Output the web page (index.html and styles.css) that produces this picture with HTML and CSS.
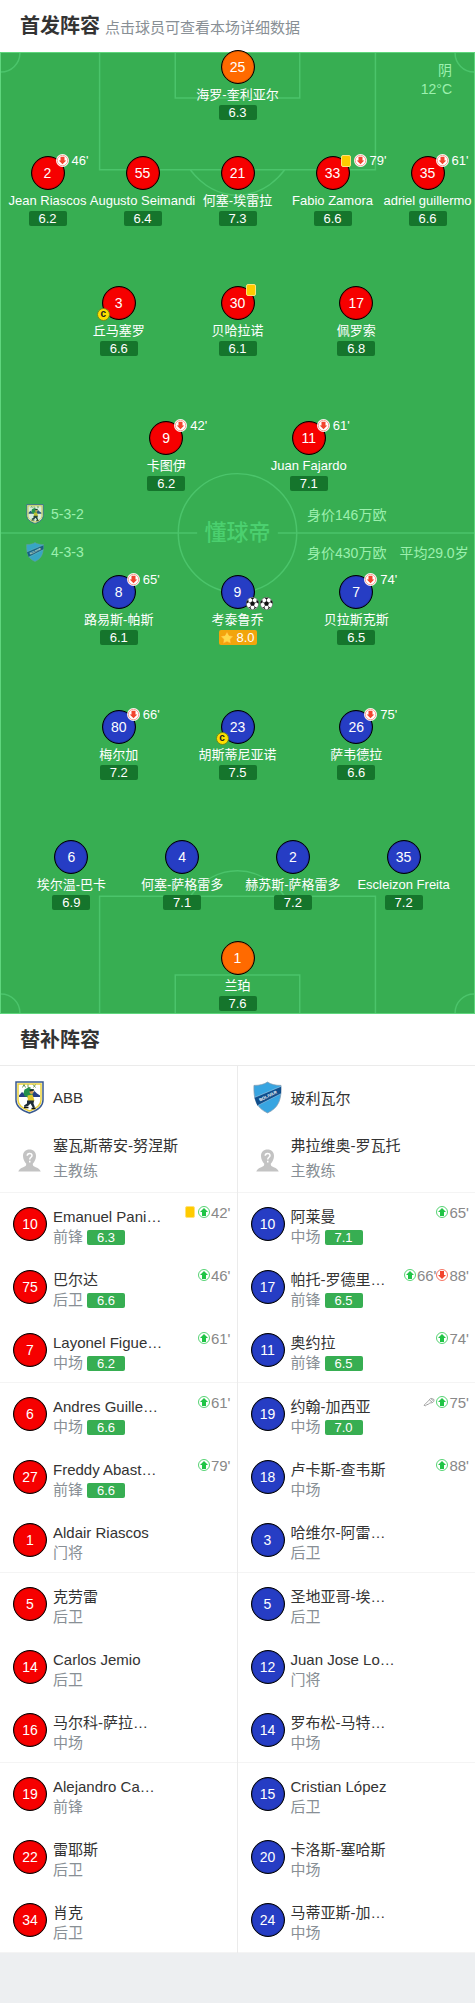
FILE: index.html
```html
<!DOCTYPE html>
<html lang="zh-CN">

<head>
    <meta charset="UTF-8">
    <meta name="viewport" content="width=device-width, initial-scale=1.0">
    <title>首发阵容</title>
    <link rel="stylesheet" href="styles.css">
</head>

<body>
    <!-- 图标 -->
    <svg class="sprite" aria-hidden="true">
        <symbol id="down" viewBox="0 0 26 26">
            <circle cx="13" cy="13" r="13" fill="#fff"/>
            <circle cx="13" cy="13" r="10.5" fill="none" stroke="#f2442e" stroke-width="1"/>
            <path d="M9 5.5h8V13h3.5L13 20.500 5.500 13H9z" fill="#f2442e"/>
        </symbol>
        <symbol id="out" viewBox="0 0 24 24">
            <circle cx="12" cy="12" r="11" fill="#fff" stroke="#f2442e" stroke-width="1.5"/>
            <path d="M8 4h8v8h4l-8 8-8-8h4z" fill="#f2442e"/>
        </symbol>
        <symbol id="up" viewBox="0 0 24 24">
            <circle cx="12" cy="12" r="11" fill="#fff" stroke="#1fc445" stroke-width="1.5"/>
            <path d="M8 20h8v-8h4l-8-8-8 8h4z" fill="#1fc445"/>
        </symbol>
        <symbol id="ball" viewBox="0 0 26 26">
            <circle cx="13" cy="13" r="12.4" fill="#fff" stroke="#444" stroke-width="1"/>
            <path d="M13 8l5 3.7-1.9 5.8H9.9L8 11.7zM8.5 1.5h9L13 4.8zM1 9.5L4.5 5l.8 5.2L1 14zM25 9.5L21.5 5l-.8 5.2L25 14zM4 20l5.2.4L11 25.2zM22 20l-5.2.4L15 25.2z" fill="#111"/>
            <path d="M13 8V4M18 11.7l3.5-1.5M16.1 17.5l2 3M9.900 17.5l-2 3M8 11.7l-3.5-1.5" stroke="#111" stroke-width="1.2"/>
        </symbol>
        <symbol id="star" viewBox="0 0 26 24">
            <path d="M13 1l3.800 7.200 8 1.300-5.600 5.700 1.100 7.900-7.300-3.400-7.300 3.400 1.100-7.900L1.200 9.500l8-1.300z" fill="#ffd84a" stroke="#ff9418" stroke-width="1" stroke-linejoin="round"/>
        </symbol>
        <symbol id="assist" viewBox="0 0 24 18">
            <path d="M2 15.5L12.5 5c1-2.5 2.5-3.5 5-3l4.5 2c.5 3-1 5.5-4 6.5l-5 .5-3 3.5-2-1-3 3.500zM13 5l5 4M16 2.5L21 7" fill="#fff" stroke="#888" stroke-width="1.5" stroke-linejoin="round"/>
        </symbol>
        <symbol id="head" viewBox="0 0 46 46">
            <path d="M23 1c8 0 13 5 13 13 0 6-3 12-6.5 15.5 0 4 1.5 5 6 7C41 38.5 44 41 45.5 45H.5C2 41 5 38.5 10.5 36.5c4.500-2 6-3 6-7C13 26 10 20 10 14 10 6 15 1 23 1z" fill="#c3c3c3"/>
            <path d="M18.5 13.5c0-6 9.500-6 9.500-.5 0 3.500-4.500 3.500-4.500 8M23.500 23.500v3.500" fill="none" stroke="#fff" stroke-width="3"/>
        </symbol>
        <symbol id="abb" viewBox="0 0 58 66">
            <path d="M2 2h54v36c0 12-11 21-27 26C13 59 2 50 2 38z" fill="#fff" stroke="#39598f" stroke-width="3"/>
            <path d="M6 6h46v32c0 10-9 17-23 22C15 55 6 48 6 38z" fill="none" stroke="#ecd23c" stroke-width="3"/>
            <path d="M8 29l6-7 5 4 5-6 8 6 7-6 5 5 6 4v3H8z" fill="#253f86"/>
            <path d="M15 13l3-6 3 6M26 7v6h5M36 7l5 6M37 13l4-6" fill="none" stroke="#6c9a58" stroke-width="2"/>
            <path d="M19 17l8-4 8 4 2 7-9 10-9-4-2-6z" fill="#23904c"/>
            <circle cx="33" cy="22" r="4" fill="#d79b55"/>
            <path d="M29 17l8-1 2 3-9 2z" fill="#152c24"/>
            <path d="M25 29l10-2 4 12-3 4H26z" fill="#dfc62c"/>
            <path d="M24 39h14l-1 6 3 8-4 1-5-9-5 5-7 2-1-3 6-4z" fill="#1d2b36"/>
            <path d="M18 53h9M33 55h8" stroke="#111" stroke-width="3"/>
        </symbol>
        <symbol id="bolivar" viewBox="0 0 60 66">
            <path d="M30 1c7 5 16 7 28 7 1 28-4 46-28 57C6 54 1 36 2 8c12 0 21-2 28-7z" fill="#38a5e1" stroke="#8298ad" stroke-width="1.5"/>
            <path d="M3 33L58 10v15L9 50z" fill="#104e8b"/>
            <path d="M3 33L58 10M9 50l49-25" stroke="#bfe0f5" stroke-width="1"/>
            <text class="crest-text" x="31" y="33" transform="rotate(-26 31 30)">BOLIVAR</text>
        </symbol>
    </svg>

    <header class="title">
        <h2>首发阵容</h2>
        <span>点击球员可查看本场详细数据</span>
    </header>

    <main class="pitch">
        <!-- 球场线 -->
        <svg class="lines" viewBox="0 0 475 962" preserveAspectRatio="none" aria-hidden="true">
            <g fill="none" stroke="#4bc46b" stroke-width="1.5">
                <path d="M99 0v117h277V0M175 0v45h125V0M190 117c26 34 69 34 95 0"/>
                <path d="M99 962V845h277v117M175 962v-38h125v38M190 845c26-34 69-34 95 0"/>
                <path d="M0 481h197M278 481h197"/>
                <circle cx="237.5" cy="481" r="59.5"/>
                <path d="M0 19A19 19 0 0 0 19 0M475 19A19 19 0 0 1 456 0M0 943a19 19 0 0 1 19 19M475 943a19 19 0 0 0-19 19"/>
            </g>
        </svg>
        <div class="weather">阴<br>12°C</div>

        <div class="row first">
            <a class="player" href="#"><b class="num gk">25</b><span class="name">海罗-奎利亚尔</span><i class="rate">6.3</i></a>
        </div>
        <div class="row row5">
            <a class="player" href="#"><b class="num red">2<span class="ev"><svg><use href="#down"/></svg>46'</span></b><span class="name">Jean Riascos</span><i class="rate">6.2</i></a>
            <a class="player" href="#"><b class="num red">55</b><span class="name">Augusto Seimandi</span><i class="rate">6.4</i></a>
            <a class="player" href="#"><b class="num red">21</b><span class="name">何塞-埃雷拉</span><i class="rate">7.3</i></a>
            <a class="player" href="#"><b class="num red">33<span class="ev"><em class="card"></em><svg><use href="#down"/></svg>79'</span></b><span class="name">Fabio Zamora</span><i class="rate">6.6</i></a>
            <a class="player" href="#"><b class="num red">35<span class="ev"><svg><use href="#down"/></svg>61'</span></b><span class="name">adriel guillermo</span><i class="rate">6.6</i></a>
        </div>
        <div class="row row3 mid">
            <a class="player" href="#"><b class="num red">3<span class="cap">c</span></b><span class="name">丘马塞罗</span><i class="rate">6.6</i></a>
            <a class="player" href="#"><b class="num red">30<span class="ev"><em class="card"></em></span></b><span class="name">贝哈拉诺</span><i class="rate">6.1</i></a>
            <a class="player" href="#"><b class="num red">17</b><span class="name">佩罗索</span><i class="rate">6.8</i></a>
        </div>
        <div class="row row2 far">
            <a class="player" href="#"><b class="num red">9<span class="ev"><svg><use href="#down"/></svg>42'</span></b><span class="name">卡图伊</span><i class="rate">6.2</i></a>
            <a class="player" href="#"><b class="num red">11<span class="ev"><svg><use href="#down"/></svg>61'</span></b><span class="name">Juan Fajardo</span><i class="rate">7.1</i></a>
        </div>

        <div class="info">
            <div class="info-line">
                <div class="form"><svg><use href="#abb"/></svg>5-3-2</div>
                <div class="worth"><span>身价146万欧</span></div>
            </div>
            <div class="info-line">
                <div class="form"><svg><use href="#bolivar"/></svg>4-3-3</div>
                <div class="worth"><span>身价430万欧</span><span>平均29.0岁</span></div>
            </div>
            <div class="brand">懂球帝</div>
        </div>

        <div class="row row3">
            <a class="player" href="#"><b class="num blue">8<span class="ev"><svg><use href="#down"/></svg>65'</span></b><span class="name">路易斯-帕斯</span><i class="rate">6.1</i></a>
            <a class="player" href="#"><b class="num blue">9<span class="goal"><svg><use href="#ball"/></svg><svg><use href="#ball"/></svg></span></b><span class="name">考泰鲁乔</span><i class="rate best"><svg><use href="#star"/></svg>8.0</i></a>
            <a class="player" href="#"><b class="num blue">7<span class="ev"><svg><use href="#down"/></svg>74'</span></b><span class="name">贝拉斯克斯</span><i class="rate">6.5</i></a>
        </div>
        <div class="row row3 far">
            <a class="player" href="#"><b class="num blue">80<span class="ev"><svg><use href="#down"/></svg>66'</span></b><span class="name">梅尔加</span><i class="rate">7.2</i></a>
            <a class="player" href="#"><b class="num blue">23<span class="cap">c</span></b><span class="name">胡斯蒂尼亚诺</span><i class="rate">7.5</i></a>
            <a class="player" href="#"><b class="num blue">26<span class="ev"><svg><use href="#down"/></svg>75'</span></b><span class="name">萨韦德拉</span><i class="rate">6.6</i></a>
        </div>
        <div class="row row4 mid">
            <a class="player" href="#"><b class="num blue">6</b><span class="name">埃尔温-巴卡</span><i class="rate">6.9</i></a>
            <a class="player" href="#"><b class="num blue">4</b><span class="name">何塞-萨格雷多</span><i class="rate">7.1</i></a>
            <a class="player" href="#"><b class="num blue">2</b><span class="name">赫苏斯-萨格雷多</span><i class="rate">7.2</i></a>
            <a class="player" href="#"><b class="num blue">35</b><span class="name">Escleizon Freita</span><i class="rate">7.2</i></a>
        </div>
        <div class="row near">
            <a class="player" href="#"><b class="num gk">1</b><span class="name">兰珀</span><i class="rate">7.6</i></a>
        </div>
    </main>

    <header class="title bench-title">
        <h2>替补阵容</h2>
    </header>

    <section class="bench">
        <div class="col">
            <div class="team"><svg><use href="#abb"/></svg>ABB</div>
            <div class="coach">
                <svg><use href="#head"/></svg>
                <p>塞瓦斯蒂安-努涅斯<small>主教练</small></p>
            </div>
            <ul class="subs">
                <li><b class="num red">10</b><p>Emanuel Pani…<small>前锋<i class="rate">6.3</i></small></p><span class="time"><em class="card"></em><svg><use href="#up"/></svg>42'</span></li>
                <li><b class="num red">75</b><p>巴尔达<small>后卫<i class="rate">6.6</i></small></p><span class="time"><svg><use href="#up"/></svg>46'</span></li>
                <li><b class="num red">7</b><p>Layonel Figue…<small>中场<i class="rate">6.2</i></small></p><span class="time"><svg><use href="#up"/></svg>61'</span></li>
                <li><b class="num red">6</b><p>Andres Guille…<small>中场<i class="rate">6.6</i></small></p><span class="time"><svg><use href="#up"/></svg>61'</span></li>
                <li><b class="num red">27</b><p>Freddy Abast…<small>前锋<i class="rate">6.6</i></small></p><span class="time"><svg><use href="#up"/></svg>79'</span></li>
                <li><b class="num red">1</b><p>Aldair Riascos<small>门将</small></p></li>
                <li><b class="num red">5</b><p>克劳雷<small>后卫</small></p></li>
                <li><b class="num red">14</b><p>Carlos Jemio<small>后卫</small></p></li>
                <li><b class="num red">16</b><p>马尔科-萨拉…<small>中场</small></p></li>
                <li><b class="num red">19</b><p>Alejandro Ca…<small>前锋</small></p></li>
                <li><b class="num red">22</b><p>雷耶斯<small>后卫</small></p></li>
                <li><b class="num red">34</b><p>肖克<small>后卫</small></p></li>
            </ul>
        </div>
        <div class="col">
            <div class="team"><svg><use href="#bolivar"/></svg>玻利瓦尔</div>
            <div class="coach">
                <svg><use href="#head"/></svg>
                <p>弗拉维奥-罗瓦托<small>主教练</small></p>
            </div>
            <ul class="subs">
                <li><b class="num blue">10</b><p>阿莱曼<small>中场<i class="rate">7.1</i></small></p><span class="time"><svg><use href="#up"/></svg>65'</span></li>
                <li><b class="num blue">17</b><p>帕托-罗德里…<small>前锋<i class="rate">6.5</i></small></p><span class="time"><svg><use href="#up"/></svg>66'<svg><use href="#out"/></svg>88'</span></li>
                <li><b class="num blue">11</b><p>奥约拉<small>前锋<i class="rate">6.5</i></small></p><span class="time"><svg><use href="#up"/></svg>74'</span></li>
                <li><b class="num blue">19</b><p>约翰-加西亚<small>中场<i class="rate">7.0</i></small></p><span class="time"><svg><use href="#assist"/></svg><svg><use href="#up"/></svg>75'</span></li>
                <li><b class="num blue">18</b><p>卢卡斯-查韦斯<small>中场</small></p><span class="time"><svg><use href="#up"/></svg>88'</span></li>
                <li><b class="num blue">3</b><p>哈维尔-阿雷…<small>后卫</small></p></li>
                <li><b class="num blue">5</b><p>圣地亚哥-埃…<small>后卫</small></p></li>
                <li><b class="num blue">12</b><p>Juan Jose Lo…<small>门将</small></p></li>
                <li><b class="num blue">14</b><p>罗布松-马特…<small>中场</small></p></li>
                <li><b class="num blue">15</b><p>Cristian López<small>后卫</small></p></li>
                <li><b class="num blue">20</b><p>卡洛斯-塞哈斯<small>中场</small></p></li>
                <li><b class="num blue">24</b><p>马蒂亚斯-加…<small>中场</small></p></li>
            </ul>
        </div>
    </section>
</body>

</html>
```
FILE: styles.css
```css
* {
    box-sizing: border-box;
}

body {
    margin: 0;
    background: #edeff1;
    color: #333;
    font-family: "Liberation Sans", Arial, "Noto Sans CJK SC", sans-serif;
    font-size: 15px;
}

h2,
p,
ul {
    margin: 0;
    padding: 0;
}

b,
i {
    font-style: normal;
    font-weight: normal;
}

svg {
    display: block;
    flex: none;
}

.sprite {
    display: none;
}

.crest-text {
    font-size: 9px;
    font-weight: bold;
    fill: #fff;
    text-anchor: middle;
}

/* 标题 */
.title {
    display: flex;
    align-items: center;
    gap: 5px;
    height: 52px;
    padding: 0 20px;
    background: #fff;
}

.bench-title {
    height: 51px;
}

.title h2 {
    font-size: 20px;
    line-height: 30px;
}

.title span {
    color: #888f95;
}

/* 球场 */
.pitch {
    position: relative;
    padding-bottom: 2px;
    background: #37ae52;
    border: 1px solid #5fd67d;
    color: #fff;
}

.lines {
    position: absolute;
    top: 0;
    left: 0;
    width: 100%;
    height: 100%;
}

.weather {
    position: absolute;
    top: 8px;
    right: 22px;
    color: #9cf0ae;
    font-size: 14px;
    line-height: 19px;
    text-align: right;
}

.row {
    display: flex;
    justify-content: center;
    margin: 0 -1px;
}

.first {
    margin-top: -3px;
}

.near {
    margin-top: 31px;
}

.row5 {
    margin-top: 36px;
}

.mid {
    margin-top: 60px;
}

.far {
    margin-top: 65px;
}

.player {
    position: relative;
    display: flex;
    flex-direction: column;
    align-items: center;
    color: #fff;
    font-size: 13px;
    text-decoration: none;
}

.row5 .player {
    width: 20%;
}

.row4 {
    padding: 0 16px;
}

.row4 .player {
    width: 25%;
}

.row3 .player {
    width: 25%;
}

.row2 .player {
    width: 30%;
}

.num {
    position: relative;
    display: flex;
    flex: none;
    align-items: center;
    justify-content: center;
    width: 34px;
    height: 34px;
    border: 1px solid #000;
    border-radius: 50%;
    box-shadow: inset 0 0 1px #000;
    color: #fff;
    font-size: 14px;
}

.red {
    background: #f60000;
}

.blue {
    background: #263dc4;
}

.gk {
    background: #ff6a00;
}

.name {
    line-height: 21px;
    white-space: nowrap;
}

.rate {
    display: flex;
    align-items: center;
    justify-content: center;
    width: 38px;
    height: 15px;
    background: #15752c;
    border-radius: 2px;
    color: #fff;
    font-size: 13px;
    line-height: 15px;
}

.best {
    gap: 2px;
    background: #f2a50c;
}

.best svg {
    width: 14px;
    height: 13px;
}

/* 比赛事件 */
.ev,
.goal {
    position: absolute;
    left: 24px;
    display: flex;
    align-items: center;
    font-size: 13px;
    line-height: 13px;
}

.ev {
    top: -3px;
    gap: 3px;
}

.goal {
    top: 21px;
    gap: 1px;
}

.ev svg,
.goal svg {
    width: 13px;
    height: 13px;
}

.card {
    width: 10px;
    height: 12px;
    background: #ffcb00;
    border: 1px solid #ffe27a;
    border-radius: 2px;
}

.cap {
    position: absolute;
    top: 21px;
    left: -6px;
    width: 13px;
    height: 13px;
    background: #ffde00;
    border: 1px solid #6f8a1c;
    border-radius: 50%;
    color: #222;
    font-size: 10px;
    font-weight: bold;
    line-height: 10px;
    text-align: center;
}

/* 阵型与身价 */
.info {
    position: relative;
    padding: 4px 0;
    color: #9cf0ae;
    font-size: 14px;
}

.info-line {
    display: grid;
    grid-template-columns: 11fr 6fr;
    align-items: center;
    height: 38px;
}

.form {
    display: flex;
    align-items: center;
    gap: 7px;
    padding-left: 25px;
}

.form svg {
    width: 18px;
    height: 20px;
    opacity: 0.8;
}

.worth {
    display: flex;
    gap: 13px;
    white-space: nowrap;
}

.brand {
    position: absolute;
    top: 26px;
    left: 0;
    width: 100%;
    color: #4bd06f;
    font-size: 22px;
    font-weight: 500;
    line-height: 32px;
    text-align: center;
}

/* 替补 */
.bench {
    display: grid;
    grid-template-columns: 1fr 1fr;
    background: #fff;
    border-top: 1px solid #ebebeb;
}

.col:first-child {
    border-right: 1px solid #ebebeb;
}

.team,
.coach {
    display: flex;
    align-items: center;
    height: 63px;
    padding-left: 15px;
    gap: 9px;
}

.team svg {
    width: 29px;
    height: 33px;
}

.coach {
    height: 64px;
    border-bottom: 1px solid #f4f4f4;
    gap: 12px;
    padding-left: 18px;
}

.coach svg {
    width: 23px;
    height: 23px;
}

.coach p {
    line-height: 25px;
    padding-bottom: 6px;
}

small {
    display: flex;
    align-items: center;
    gap: 4px;
    color: #888f95;
    font-size: 15px;
}

.subs {
    list-style: none;
}

.subs li {
    display: flex;
    gap: 6px;
    height: 63px;
    padding: 14px 6px 0 13px;
}

.subs li:nth-child(3n) {
    height: 64px;
    border-bottom: 1px solid #f4f4f4;
}

.subs p {
    line-height: 20px;
    white-space: nowrap;
}

.subs .rate {
    background: #37ae52;
}

.time {
    display: flex;
    align-items: center;
    align-self: flex-start;
    height: 20px;
    margin: -5px 0 0 auto;
    color: #888;
}

.time svg {
    width: 12px;
    height: 12px;
    margin-right: 1px;
}

.time .card {
    margin-right: 3px;
}
```
